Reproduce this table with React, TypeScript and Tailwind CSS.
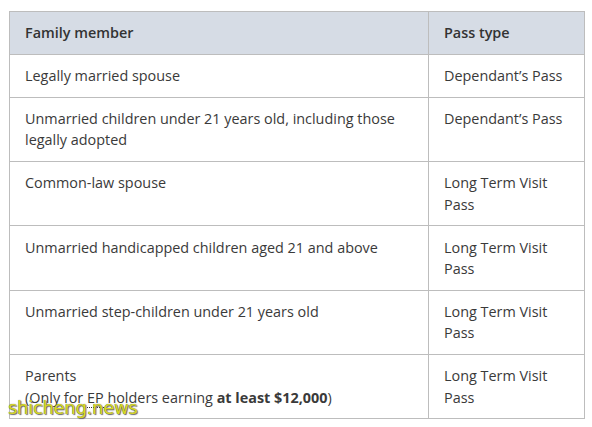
export default function App() {
  const rows: { member: React.ReactNode; pass: string }[] = [
    { member: 'Legally married spouse', pass: 'Dependant’s Pass' },
    { member: 'Unmarried children under 21 years old, including those legally adopted', pass: 'Dependant’s Pass' },
    { member: 'Common-law spouse', pass: 'Long Term Visit Pass' },
    { member: 'Unmarried handicapped children aged 21 and above', pass: 'Long Term Visit Pass' },
    { member: 'Unmarried step-children under 21 years old', pass: 'Long Term Visit Pass' },
    {
      member: (
        <>
          Parents
          <br />
          (Only for{' '}
          <abbr className="no-underline border-b border-dotted border-[#333]">EP</abbr> holders earning{' '}
          <strong className="font-bold">at least $12,000</strong>)
        </>
      ),
      pass: 'Long Term Visit Pass',
    },
  ]

  return (
    <div className="relative w-[592px] h-[427px] bg-white pt-[11px] pl-[9px] font-['Open_Sans',sans-serif] text-[14.4px] leading-[21.6px] text-[#3a3a3a]">
      <table className="w-[576px] border-collapse">
        <thead>
          <tr className="bg-[#d6dce5]">
            <th className="w-[419px] border border-[#bdbdbd] pl-[15px] pr-4 pt-[10.2px] pb-[10px] text-left font-semibold text-[#333]">
              Family member
            </th>
            <th className="border border-[#bdbdbd] pl-[15px] pr-2 pt-[10.2px] pb-[10px] text-left font-semibold text-[#333]">
              Pass type
            </th>
          </tr>
        </thead>
        <tbody>
          {rows.map((r, i) => (
            <tr key={i}>
              <td className="border border-[#bdbdbd] pl-[15px] pr-4 pt-[10.2px] pb-[10px] align-top">{r.member}</td>
              <td className="border border-[#bdbdbd] pl-[15px] pr-2 pt-[10.2px] pb-[10px] align-top">{r.pass}</td>
            </tr>
          ))}
        </tbody>
      </table>
      <div className="absolute left-[8px] top-[397px] font-['DejaVu_Sans',sans-serif] text-[18px] leading-[22px] tracking-[-0.3px] text-[#d8d820] [text-shadow:0_0_1px_#555,1px_1px_1px_#666]">
        shicheng.news
      </div>
    </div>
  )
}
